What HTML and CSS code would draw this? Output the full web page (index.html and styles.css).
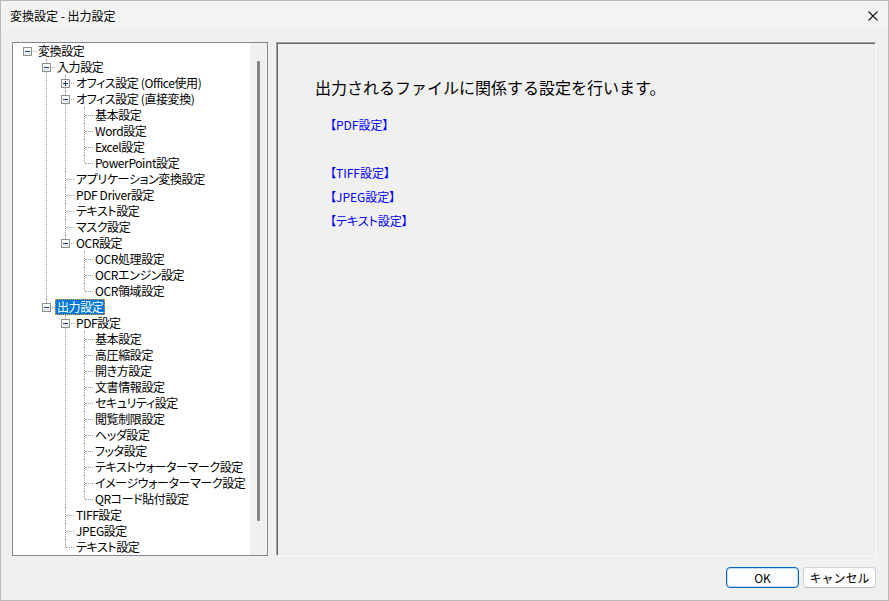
FILE: index.html
```html
<!DOCTYPE html>
<html lang="ja">
<head>
  <meta charset="UTF-8">
  <title>変換設定 - 出力設定</title>
  <link rel="stylesheet" href="styles.css">
</head>
<body>
  <div class="window">
    <div class="titlebar">
      <span class="title">変換設定 - 出力設定</span>
      <svg class="close" width="10" height="10" viewBox="0 0 10 10">
        <path d="M0.5 0.5 L9.5 9.5 M9.5 0.5 L0.5 9.5" stroke="#1a1a1a" stroke-width="1.1" fill="none"/>
      </svg>
    </div>

    <div class="content">
      <!-- 左側のツリー -->
      <div class="tree-box">
        <div class="tree">
          <ul>
            <li>
              <div class="row"><span class="toggle minus"></span><span class="label">変換設定</span></div>
              <ul>
                <li>
                  <div class="row"><span class="toggle minus"></span><span class="label">入力設定</span></div>
                  <ul>
                    <li><div class="row"><span class="toggle plus"></span><span class="label">オフィス設定 (Office使用)</span></div></li>
                    <li>
                      <div class="row"><span class="toggle minus"></span><span class="label">オフィス設定 (直接変換)</span></div>
                      <ul>
                        <li><div class="row"><span class="leaf"></span><span class="label">基本設定</span></div></li>
                        <li><div class="row"><span class="leaf"></span><span class="label">Word設定</span></div></li>
                        <li><div class="row"><span class="leaf"></span><span class="label">Excel設定</span></div></li>
                        <li><div class="row"><span class="leaf"></span><span class="label">PowerPoint設定</span></div></li>
                      </ul>
                    </li>
                    <li><div class="row"><span class="leaf"></span><span class="label">アプリケーション変換設定</span></div></li>
                    <li><div class="row"><span class="leaf"></span><span class="label">PDF Driver設定</span></div></li>
                    <li><div class="row"><span class="leaf"></span><span class="label">テキスト設定</span></div></li>
                    <li><div class="row"><span class="leaf"></span><span class="label">マスク設定</span></div></li>
                    <li>
                      <div class="row"><span class="toggle minus"></span><span class="label">OCR設定</span></div>
                      <ul>
                        <li><div class="row"><span class="leaf"></span><span class="label">OCR処理設定</span></div></li>
                        <li><div class="row"><span class="leaf"></span><span class="label">OCRエンジン設定</span></div></li>
                        <li><div class="row"><span class="leaf"></span><span class="label">OCR領域設定</span></div></li>
                      </ul>
                    </li>
                  </ul>
                </li>
                <li>
                  <div class="row"><span class="toggle minus"></span><span class="label selected">出力設定</span></div>
                  <ul>
                    <li>
                      <div class="row"><span class="toggle minus"></span><span class="label">PDF設定</span></div>
                      <ul>
                        <li><div class="row"><span class="leaf"></span><span class="label">基本設定</span></div></li>
                        <li><div class="row"><span class="leaf"></span><span class="label">高圧縮設定</span></div></li>
                        <li><div class="row"><span class="leaf"></span><span class="label">開き方設定</span></div></li>
                        <li><div class="row"><span class="leaf"></span><span class="label">文書情報設定</span></div></li>
                        <li><div class="row"><span class="leaf"></span><span class="label">セキュリティ設定</span></div></li>
                        <li><div class="row"><span class="leaf"></span><span class="label">閲覧制限設定</span></div></li>
                        <li><div class="row"><span class="leaf"></span><span class="label">ヘッダ設定</span></div></li>
                        <li><div class="row"><span class="leaf"></span><span class="label">フッタ設定</span></div></li>
                        <li><div class="row"><span class="leaf"></span><span class="label">テキストウォーターマーク設定</span></div></li>
                        <li><div class="row"><span class="leaf"></span><span class="label">イメージウォーターマーク設定</span></div></li>
                        <li><div class="row"><span class="leaf"></span><span class="label">QRコード貼付設定</span></div></li>
                      </ul>
                    </li>
                    <li><div class="row"><span class="leaf"></span><span class="label">TIFF設定</span></div></li>
                    <li><div class="row"><span class="leaf"></span><span class="label">JPEG設定</span></div></li>
                    <li><div class="row"><span class="leaf"></span><span class="label">テキスト設定</span></div></li>
                  </ul>
                </li>
              </ul>
            </li>
          </ul>
        </div>
        <div class="scrollbar"><div class="thumb"></div></div>
      </div>

      <!-- 右側の説明パネル -->
      <div class="panel">
        <p class="lead">出力されるファイルに関係する設定を行います。</p>
        <div class="links">
          <a href="#">【PDF設定】</a>
          <span class="blank"></span>
          <a href="#">【TIFF設定】</a>
          <a href="#">【JPEG設定】</a>
          <a href="#">【テキスト設定】</a>
        </div>
      </div>
    </div>

    <div class="footer">
      <button class="btn default">OK</button>
      <button class="btn">キャンセル</button>
    </div>
  </div>
</body>
</html>
```

FILE: styles.css
```css
html, body {
  margin: 0;
  padding: 0;
  background-color: #f0f0f0;
  font-family: "Noto Sans CJK JP", sans-serif;
  font-size: 12px;
  color: #000;
}
.window {
  width: 889px;
  height: 601px;
  box-sizing: border-box;
  border: 1px solid #b9b9b9;
  background-color: #f0f0f0;
  display: flex;
  flex-direction: column;
}
.titlebar {
  height: 29px;
  flex: none;
  display: flex;
  align-items: center;
  justify-content: space-between;
  padding: 0 10px 0 9px;
  background-color: #f3f3f3;
  line-height: 16px;
}
.close {
  display: block;
}
.content {
  display: flex;
  gap: 8px;
  padding: 12px 12px 0 11px;
  height: 514px;
  flex: none;
}

/* ツリー */
.tree-box {
  width: 256px;
  box-sizing: border-box;
  border: 1px solid #828790;
  background-color: #fff;
  display: flex;
  overflow: hidden;
}
.tree {
  flex: 1;
  overflow: hidden;
  font-feature-settings: "palt";
  letter-spacing: -0.4px;
}
.tree ul {
  list-style: none;
  margin: 0;
  padding: 0;
}
.tree li ul {
  padding-left: 19px;
}
.tree li {
  position: relative;
}
/* 兄弟をつなぐ縦線 */
.tree li::before {
  content: "";
  position: absolute;
  left: 14px;
  top: 0;
  bottom: 0;
  border-left: 1px dotted #a0a0a0;
}
.tree li:last-child::before {
  bottom: auto;
  height: 8px;
}
.tree > ul > li::before {
  display: none;
}
/* 横線 */
.tree li::after {
  content: "";
  position: absolute;
  left: 15px;
  top: 8px;
  width: 8px;
  border-top: 1px dotted #a0a0a0;
}
.row {
  display: flex;
  align-items: flex-start;
  height: 16px;
  padding-left: 10px;
  position: relative;
  z-index: 1;
}
.toggle, .leaf {
  width: 9px;
  height: 9px;
  margin-top: 4px;
  margin-right: 4px;
  flex: none;
  box-sizing: border-box;
  position: relative;
}
.toggle {
  border: 1px solid #919191;
  background: linear-gradient(#ffffff, #e6e6e6);
}
.toggle::before {
  content: "";
  position: absolute;
  left: 1px;
  top: 3px;
  width: 5px;
  height: 1px;
  background-color: #1f3d8a;
}
.toggle.plus::after {
  content: "";
  position: absolute;
  left: 3px;
  top: 1px;
  width: 1px;
  height: 5px;
  background-color: #1f3d8a;
}
.label {
  padding: 0 2px;
  height: 16px;
  line-height: 16px;
  white-space: nowrap;
  box-sizing: border-box;
}
.label.selected {
  background-color: #0078d7;
  color: #fff;
  outline: 1px dotted #ff9a1f;
  outline-offset: -1px;
}
.scrollbar {
  width: 17px;
  flex: none;
  background-color: #f0f0f0;
  padding: 18px 0 0 7px;
  box-sizing: border-box;
}
.thumb {
  width: 3px;
  height: 460px;
  background-color: #858585;
  border-radius: 1px;
}

/* 右パネル */
.panel {
  width: 600px;
  box-sizing: border-box;
  border-style: solid;
  border-width: 1px;
  border-color: #a0a0a0 #ffffff #ffffff #a0a0a0;
  box-shadow: inset 1px 1px 0 #696969, inset -1px -1px 0 #e3e3e3;
  padding: 33px 0 0 38px;
}
.lead {
  margin: 0;
  font-size: 16px;
  line-height: 22px;
}
.links {
  margin-top: 15px;
  padding-left: 15px;
  display: flex;
  flex-direction: column;
  align-items: flex-start;
  font-feature-settings: "palt";
}
.links a, .links .blank {
  display: block;
  height: 24px;
  line-height: 24px;
  color: #0000ff;
  text-decoration: none;
}

/* ボタン */
.footer {
  display: flex;
  justify-content: flex-end;
  gap: 4px;
  padding: 11px 12px 0 0;
}
.btn {
  width: 73px;
  height: 21px;
  box-sizing: border-box;
  font-family: "Noto Sans CJK JP", sans-serif;
  font-size: 12px;
  line-height: 17px;
  padding: 0;
  background-color: #fdfdfd;
  border: 1px solid #d0d0d0;
  border-bottom-color: #b8b8b8;
  border-radius: 4px;
  color: #000;
}
.btn.default {
  border: 1px solid #0067c0;
  box-shadow: inset 0 0 0 1px #c5dcf2;
}
```
